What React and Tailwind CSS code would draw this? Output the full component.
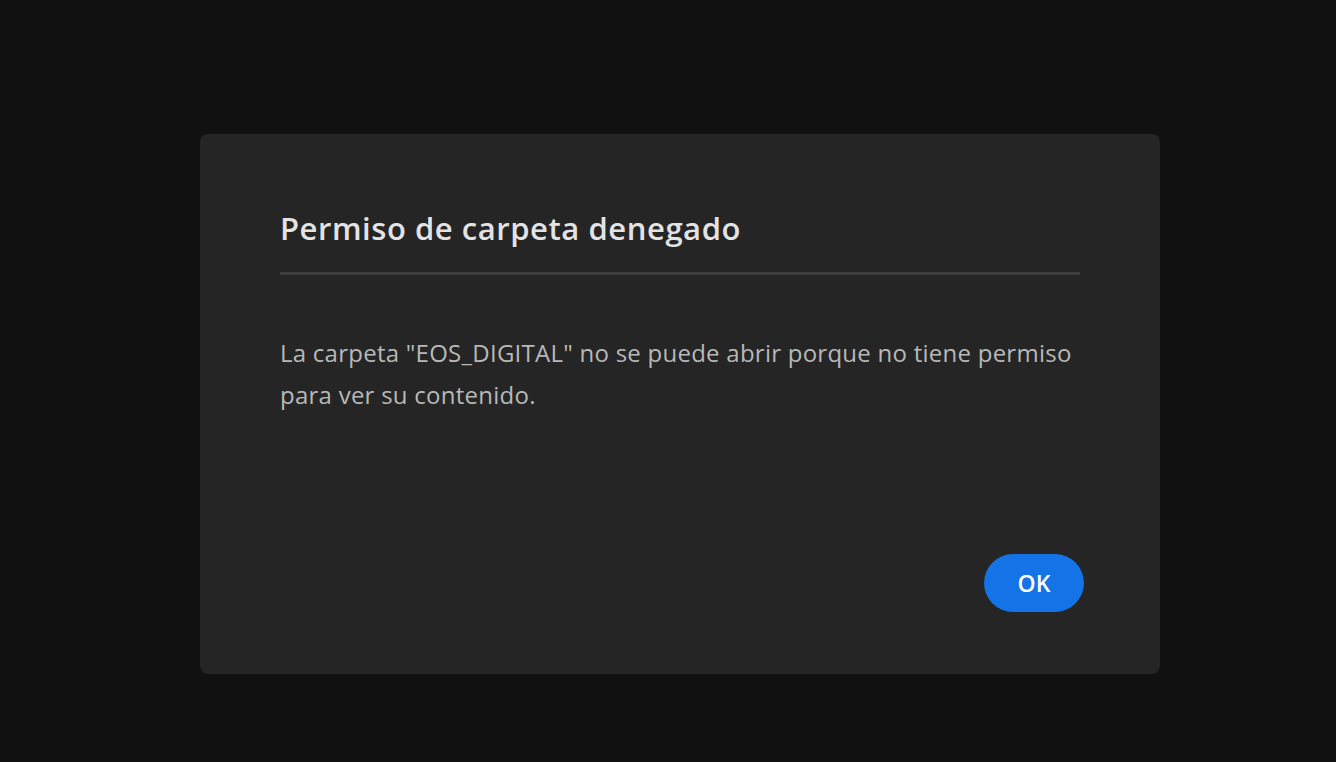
import React from 'react';

export default function App() {
  return (
    <div
      className="w-[1336px] h-[762px] bg-[#111111] pl-[200px] pt-[134px]"
      style={{ fontFamily: '"Open Sans", "Noto Sans", sans-serif' }}
    >
      <div className="w-[960px] h-[540px] bg-[#252525] rounded-[8px] flex flex-col pl-[80px] pr-[80px] pt-[66px] pb-[62px]">
        {/* Header */}
        <h2 className="text-[31px] leading-[56px] font-semibold text-[#e3e3e3] tracking-[0.55px]">
          Permiso de carpeta denegado
        </h2>
        <div className="mt-[16px] h-[3px] bg-[#3e3e3e]" />

        {/* Body */}
        <p className="mt-[57px] text-[24px] leading-[42px] text-[#b8b8b8] tracking-[0.25px]">
          La carpeta "EOS_DIGITAL" no se puede abrir porque no tiene permiso para ver su contenido.
        </p>

        {/* Footer */}
        <div className="mt-auto flex justify-end -mr-[4px]">
          <button className="w-[100px] h-[58px] rounded-full bg-[#1473e6] text-white text-[23px] font-semibold">
            OK
          </button>
        </div>
      </div>
    </div>
  );
}
